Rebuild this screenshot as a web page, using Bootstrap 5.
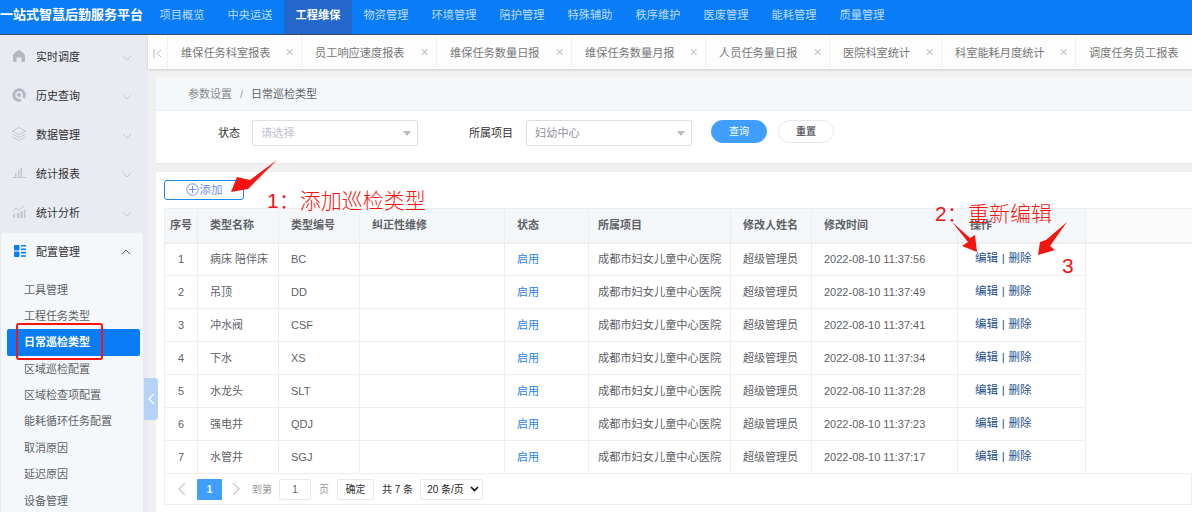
<!DOCTYPE html>
<html lang="zh"><head><meta charset="utf-8"><title>一站式智慧后勤服务平台</title>
<link href="https://cdn.jsdelivr.net/npm/bootstrap@5.3.0/dist/css/bootstrap.min.css" rel="stylesheet">
<style>
html,body{height:512px;overflow:hidden}
body{font-family:"Liberation Sans","Noto Sans CJK SC",sans-serif;font-size:11px;color:#606266;background:#f0f0f0;position:relative;width:1192px}
.topbar{height:35px;background:#097cf7;border-bottom:1px solid #3d4f66}
.brand{width:148px;font-size:13px;font-weight:700;color:#fff;line-height:30px;white-space:nowrap;overflow:hidden}
.topitem{width:68px;text-align:center;color:#bcdcff;line-height:30px;font-size:11.2px}
.topitem.on{background:#2267c9;color:#fff;font-weight:700}
.bodyrow{height:477px}
.sidebar{width:148px;background:#e9ebf3;overflow:hidden;flex:none;padding-top:3px}
.sideitem{height:39px;color:#303133;padding-left:36px;padding-right:17px;line-height:39px;position:relative}
.sideico{width:14px;height:14px;position:absolute;left:12px;top:11px}
.sidechev{position:absolute;right:16px;top:17px}
.sidegroup{background:#f5f8fb;margin:0 5px 0 1px;border-radius:4px 4px 0 0;height:300px}
.sidegroup .sideitem{padding-left:35px;padding-right:12px}
.sidegroup .sideico{left:12px}
.sidegroup .sidechev{right:12px;top:16px}
.subitem{height:26.4px;line-height:26.4px;color:#606266;margin:0 3px 0 6px;border-radius:2px;padding-left:17px}
.subitem.on{background:#097cf7;color:#fff;font-weight:700}
.subs{padding-top:4.5px}
.mainarea{flex:1;min-width:0}
.tabbar{height:34px;background:#fdfdfd;box-shadow:0 1px 2px rgba(0,0,0,.15);overflow:hidden}
.tabback{width:20px;flex:none;border-right:1px solid #f0f0f0;padding-top:2px}
.tabcell{flex:none;height:34px;line-height:37px;border-right:1px solid #f0f0f0;padding-left:13px;color:#777;font-size:11.2px;position:relative;white-space:nowrap}
.tabx{position:absolute;right:7px;top:0;color:#c8c8c8;font-size:11px;line-height:35px}
.panel1{margin:8px 0 8px 8px;background:#fff;height:87px;border-bottom:1px solid #e8e8e8}
.crumbs{height:34px;background:#f5f8fb;border-bottom:1px solid #ebeef5;padding-left:32px;line-height:34px;color:#606266}
.crumbs i{font-style:normal;color:#999;margin:0 8px}
.crumbs span{color:#888}
.formrow{padding-top:9px;height:52px}
.flabel{color:#303133;text-align:right;line-height:26px;flex:none}
.fsel{width:166px;height:26px;border:1px solid #dcdfe6;border-radius:2px;line-height:25px;padding-left:8px;color:#c0c4cc;position:relative;flex:none;font-size:11.2px}
.fsel::after{content:"";position:absolute;right:6px;top:10px;border:4px solid transparent;border-top:5px solid #bbb}
.fsel.val{color:#909399}
.pillbtn{width:56px;height:23px;border-radius:12px;font-size:10px;line-height:21px;text-align:center;border:1px solid #e4e7ed;flex:none;font-weight:700;background:#fff;color:#606266;padding:0}
.pillbtn.pri{background:#409eff;border-color:#409eff;color:#fff;font-weight:400}
.panel2{margin-left:8px;background:#fff;height:340px;padding:8px}
.addbtn{width:80px;height:20px;border:1px solid #1f86f0;border-radius:3px;color:#6e8df0;font-size:11.5px;line-height:17px;text-align:center;display:block;padding:0;background:#fff}
.addbtn svg{vertical-align:-2.5px;margin-right:1px}
.gridtbl{border-collapse:collapse;table-layout:fixed;width:1028px;margin-top:8px;color:#606266}
.gridtbl th,.gridtbl td{border:1px solid #eeeeee;padding:0 0 0 12px;height:33px;font-weight:400;overflow:hidden;white-space:nowrap}
.gridtbl th{height:34px;background:#f5f8fb;font-weight:700;color:#606266;border-bottom:2px solid #eeeeee;text-align:left}
.gridtbl th.ends,.gridtbl td.ends{background:#fafafa;border-left:0;border-right:0}
.gridtbl td.ends{background:#fff;border-bottom:0;border-top:1px solid #eee}
.gridtbl tr:not(:first-child) td.ends{border-top:0}
.gridtbl .cnum{padding-left:0;text-align:center}
.gridtbl .cproj{padding-left:9px}
.gridtbl td.cproj{font-size:11.2px}
.gridtbl td.cact{padding:0 0 1px 17px;color:#1d4f91;font-size:11.5px;word-spacing:.5px}
.gridtbl td.linkblue{color:#2a7ff0}
.pager{height:32px;border:1px solid #eee;width:1028px;padding-left:12px;color:#999;font-size:10px;margin-top:-1px}
.pagecur{width:25px;height:21px;background:#409eff;color:#fff;font-weight:700;text-align:center;line-height:21px;margin-left:11px;border-radius:1px}
.pbox{border:1px solid #e8e8e8;height:21px;line-height:19px;text-align:center;color:#606266;border-radius:2px;flex:none}
.overlay{position:absolute;left:0;top:0;pointer-events:none}
.redtxt{position:absolute;color:#f5140f;font-size:21px;line-height:24px;white-space:nowrap;font-weight:300}
.redbox{position:absolute;left:16px;top:323px;width:87px;height:37px;border:2px solid #f5140f;border-radius:3px}
.collapser{position:absolute;left:144px;top:378px;width:14px;height:42px;background:#b5d3f6;border-radius:0 3px 3px 0}
</style></head>
<body>
<nav class="topbar d-flex">
 <div class="brand">一站式智慧后勤服务平台</div>
 <div class="topitem">项目概览</div><div class="topitem">中央运送</div><div class="topitem on">工程维保</div><div class="topitem">物资管理</div><div class="topitem">环境管理</div><div class="topitem">陪护管理</div><div class="topitem">特殊辅助</div><div class="topitem">秩序维护</div><div class="topitem">医废管理</div><div class="topitem">能耗管理</div><div class="topitem">质量管理</div>
</nav>
<div class="bodyrow d-flex">
 <aside class="sidebar">
  <div class="sideitem"><svg class="sideico" viewBox="0 0 14 14"><path fill="#b4b7c2" d="M7 1 C8 1 13 5 13 6.500 V12 Q13 13 12 13 H9.500 V8.500 H4.500 V13 H2 Q1 13 1 12 V6.500 C1 5 6 1 7 1Z"/></svg>实时调度<svg class="sidechev" width="10" height="6" viewBox="0 0 10 6"><path d="M1 1l4 4 4-4" fill="none" stroke="#c6c8d0"/></svg></div>
  <div class="sideitem"><svg class="sideico" viewBox="0 0 14 14"><path fill="none" stroke="#b4b7c2" stroke-width="2.800" d="M11.500 10 A5.300 5.300 0 1 0 9 12"/><circle cx="7" cy="7" r="2" fill="#b4b7c2"/></svg>历史查询<svg class="sidechev" width="10" height="6" viewBox="0 0 10 6"><path d="M1 1l4 4 4-4" fill="none" stroke="#c6c8d0"/></svg></div>
  <div class="sideitem"><svg class="sideico" viewBox="0 0 14 14"><path fill="none" stroke="#c2c5cf" d="M7 .5l6.500 3.500-6.500 3.500L.5 4zM.5 7l6.500 3.500L13.500 7M.5 10l6.500 3.500 6.500-3.500"/></svg>数据管理<svg class="sidechev" width="10" height="6" viewBox="0 0 10 6"><path d="M1 1l4 4 4-4" fill="none" stroke="#c6c8d0"/></svg></div>
  <div class="sideitem"><svg class="sideico" viewBox="0 0 14 14"><path fill="#c4c7d1" d="M0 11h14v1H0zM3 7h1.500v4H3zM6 4h1.500v7H6zM8.500 2H10v9H8.500z"/></svg>统计报表<svg class="sidechev" width="10" height="6" viewBox="0 0 10 6"><path d="M1 1l4 4 4-4" fill="none" stroke="#c6c8d0"/></svg></div>
  <div class="sideitem"><svg class="sideico" viewBox="0 0 14 14"><path fill="#c4c7d1" d="M1 9h2v4H1zM5 8h2.500v5H5zM8.500 6.500H11V13H8.500zM12 5h1.500v8H12z"/><path fill="none" stroke="#c4c7d1" d="M1 6l3-3 3 2 5-4"/></svg>统计分析<svg class="sidechev" width="10" height="6" viewBox="0 0 10 6"><path d="M1 1l4 4 4-4" fill="none" stroke="#c6c8d0"/></svg></div>
  <div class="sidegroup">
   <div class="sideitem"><svg class="sideico" viewBox="0 0 14 14"><rect x="1" y="1" width="5.500" height="5.500" rx="1" fill="#097cf7"/><rect x="1" y="7.500" width="5.500" height="5.500" rx="1" fill="#097cf7"/><path fill="#097cf7" d="M8 1h5v1.600H8zM8 4.400h5V6H8zM8 7.800h5v1.600H8zM8 11.200h5v1.600H8z"/></svg>配置管理<svg class="sidechev" width="10" height="6" viewBox="0 0 10 6"><path d="M1 5l4-4 4 4" fill="none" stroke="#555"/></svg></div>
   <div class="subs">
    <div class="subitem">工具管理</div><div class="subitem">工程任务类型</div><div class="subitem on">日常巡检类型</div><div class="subitem">区域巡检配置</div><div class="subitem">区域检查项配置</div><div class="subitem">能耗循环任务配置</div><div class="subitem">取消原因</div><div class="subitem">延迟原因</div><div class="subitem">设备管理</div>
   </div>
  </div>
 </aside>
 <main class="mainarea">
  <div class="tabbar d-flex">
   <div class="tabback d-flex align-items-center justify-content-center"><svg width="9" height="9" viewBox="0 0 9 9"><path d="M1 0v9M8 1L4 4.500 8 8" fill="none" stroke="#bbb"/></svg></div>
   <div class="tabcell" style="width:134px">维保任务科室报表<span class="tabx">✕</span></div>
   <div class="tabcell" style="width:135px">员工响应速度报表<span class="tabx">✕</span></div>
   <div class="tabcell" style="width:135px">维保任务数量日报<span class="tabx">✕</span></div>
   <div class="tabcell" style="width:134px">维保任务数量月报<span class="tabx">✕</span></div>
   <div class="tabcell" style="width:124px">人员任务量日报<span class="tabx">✕</span></div>
   <div class="tabcell" style="width:112px">医院科室统计<span class="tabx">✕</span></div>
   <div class="tabcell" style="width:134px">科室能耗月度统计<span class="tabx">✕</span></div>
   <div class="tabcell border-0" style="width:116px">调度任务员工报表</div>
  </div>
  <section class="panel1">
   <div class="crumbs"><span>参数设置</span><i>/</i>日常巡检类型</div>
   <div class="formrow d-flex">
    <div class="flabel" style="width:84px">状态</div>
    <div class="fsel" style="margin-left:12px">请选择</div>
    <div class="flabel" style="width:95px">所属项目</div>
    <div class="fsel val" style="margin-left:13px">妇幼中心</div>
    <button class="pillbtn pri" style="margin-left:19px">查询</button>
    <button class="pillbtn" style="margin-left:11px">重置</button>
   </div>
  </section>
  <section class="panel2">
   <button class="addbtn"><svg width="13" height="13" viewBox="0 0 13 13"><circle cx="6.500" cy="6.500" r="5.700" fill="none" stroke="#6e8df0"/><path d="M6.500 3v7M3 6.500h7" stroke="#6e8df0"/></svg>添加</button>
   <table class="gridtbl">
    <colgroup><col style="width:33px"><col style="width:81px"><col style="width:81px"><col style="width:145px"><col style="width:84px"><col style="width:142px"><col style="width:81px"><col style="width:146px"><col style="width:128px"><col></colgroup>
    <thead><tr><th class="cnum">序号</th><th>类型名称</th><th>类型编号</th><th>纠正性维修</th><th>状态</th><th class="cproj">所属项目</th><th>修改人姓名</th><th>修改时间</th><th>操作</th><th class="ends"></th></tr></thead>
    <tbody>
     <tr><td class="cnum">1</td><td>病床 陪伴床</td><td>BC</td><td></td><td class="linkblue">启用</td><td class="cproj">成都市妇女儿童中心医院</td><td>超级管理员</td><td>2022-08-10 11:37:56</td><td class="cact">编辑 | 删除</td><td class="ends"></td></tr>
     <tr><td class="cnum">2</td><td>吊顶</td><td>DD</td><td></td><td class="linkblue">启用</td><td class="cproj">成都市妇女儿童中心医院</td><td>超级管理员</td><td>2022-08-10 11:37:49</td><td class="cact">编辑 | 删除</td><td class="ends"></td></tr>
     <tr><td class="cnum">3</td><td>冲水阀</td><td>CSF</td><td></td><td class="linkblue">启用</td><td class="cproj">成都市妇女儿童中心医院</td><td>超级管理员</td><td>2022-08-10 11:37:41</td><td class="cact">编辑 | 删除</td><td class="ends"></td></tr>
     <tr><td class="cnum">4</td><td>下水</td><td>XS</td><td></td><td class="linkblue">启用</td><td class="cproj">成都市妇女儿童中心医院</td><td>超级管理员</td><td>2022-08-10 11:37:34</td><td class="cact">编辑 | 删除</td><td class="ends"></td></tr>
     <tr><td class="cnum">5</td><td>水龙头</td><td>SLT</td><td></td><td class="linkblue">启用</td><td class="cproj">成都市妇女儿童中心医院</td><td>超级管理员</td><td>2022-08-10 11:37:28</td><td class="cact">编辑 | 删除</td><td class="ends"></td></tr>
     <tr><td class="cnum">6</td><td>强电井</td><td>QDJ</td><td></td><td class="linkblue">启用</td><td class="cproj">成都市妇女儿童中心医院</td><td>超级管理员</td><td>2022-08-10 11:37:23</td><td class="cact">编辑 | 删除</td><td class="ends"></td></tr>
     <tr><td class="cnum">7</td><td>水管井</td><td>SGJ</td><td></td><td class="linkblue">启用</td><td class="cproj">成都市妇女儿童中心医院</td><td>超级管理员</td><td>2022-08-10 11:37:17</td><td class="cact">编辑 | 删除</td><td class="ends"></td></tr>
    </tbody>
   </table>
   <div class="pager d-flex align-items-center">
    <svg width="9" height="14" viewBox="0 0 9 14"><path d="M8 1L2 7l6 6" fill="none" stroke="#ccc" stroke-width="1.400"/></svg>
    <div class="pagecur">1</div>
    <svg style="margin-left:10px" width="9" height="14" viewBox="0 0 9 14"><path d="M1 1l6 6-6 6" fill="none" stroke="#ccc" stroke-width="1.400"/></svg>
    <span style="margin-left:11px">到第</span>
    <div class="pbox" style="width:32px;margin-left:7px">1</div>
    <span style="margin-left:8px">页</span>
    <div class="pbox" style="width:37px;margin-left:8px;color:#303133">确定</div>
    <span style="margin-left:8px;color:#303133">共 7 条</span>
    <div class="pbox d-flex align-items-center" style="width:63px;margin-left:7px;color:#222;padding-left:6px">20 条/页<svg style="margin-left:6px" width="9" height="6" viewBox="0 0 9 6"><path d="M1 1l3.500 3.500L8 1" fill="none" stroke="#111" stroke-width="1.700"/></svg></div>
   </div>
  </section>
 </main>
</div>
<div class="collapser d-flex align-items-center justify-content-center"><svg width="7" height="12" viewBox="0 0 7 12"><path d="M6 1L1 6l5 5" fill="none" stroke="#fff" stroke-width="1.300"/></svg></div>
<div class="redbox"></div>
<div class="redtxt" style="left:267px;top:189px">1：添加巡检类型</div>
<div class="redtxt" style="left:935px;top:202px">2：</div>
<div class="redtxt" style="left:968px;top:202px">重新编辑</div>
<div class="redtxt" style="left:1062px;top:254px">3</div>
<svg class="overlay" width="1192" height="512" viewBox="0 0 1192 512">
 <path fill="#f5140f" d="M277 160 L250 180 L237 177 L231 192 L248 189 L253 184Z"/>
 <path fill="#f5140f" d="M952 222 L970 238 L975 235 L977 252 L962 246 L968 242Z"/>
 <path fill="#f5140f" d="M1067 222 L1046 240 L1040 242 L1038 255 L1055 250 L1050 246Z"/>
</svg>
<script src="https://cdn.jsdelivr.net/npm/bootstrap@5.3.0/dist/js/bootstrap.bundle.min.js"></script>
</body></html>
